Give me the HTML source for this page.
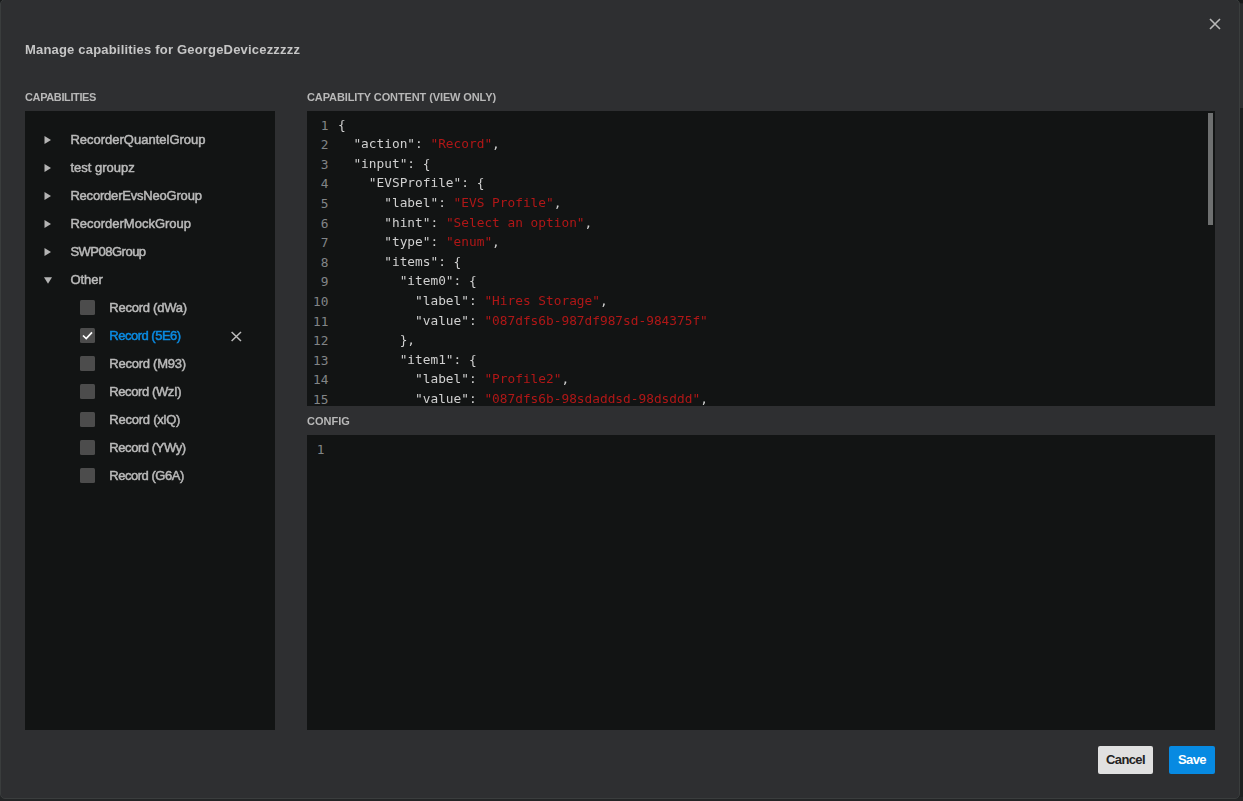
<!DOCTYPE html>
<html lang="en">
<head>
<meta charset="utf-8">
<title>Manage capabilities</title>
<style>
*{box-sizing:border-box;margin:0;padding:0}
html,body{width:1243px;height:801px;overflow:hidden;background:#232526}
body{font-family:"Liberation Sans",Arial,sans-serif;font-size:13px;color:#c9c9c9;position:relative}
.backdrop{position:absolute;left:0;top:0;width:1243px;height:801px;background:#232526}
.modal{position:absolute;left:0;top:-1px;width:1240px;height:800px;background:#2e2f31;border:1px solid #3a3d3d;border-radius:5px}
.abs{position:absolute;white-space:nowrap;will-change:transform}
.title{left:25px;top:41px;font-weight:bold;font-size:13px;line-height:18px;color:#c6c6c6;letter-spacing:0.19px}
.lbl{font-weight:bold;font-size:11px;line-height:14px;color:#b8b8b8}
.panel{position:absolute;background:#121414}
.tree-row{-webkit-text-stroke:0.5px #bababa;will-change:transform;position:absolute;left:0;width:250px;height:28px;line-height:28px;font-size:13px;color:#bababa;white-space:nowrap}
.tree-row .arrow{position:absolute;left:18px;top:9px;width:10px;height:10px}
.tree-row .txt{position:absolute;left:45.4px;top:0}
.tree-row .cb{position:absolute;left:55px;top:6px;width:15px;height:15px;background:#4c4c4c;border-radius:1.5px}
.tree-row .ctxt{position:absolute;left:84.3px;top:0}
.sel .ctxt{color:#0b8be2;-webkit-text-stroke:0.5px #0b8be2}
.code{position:absolute;left:0;top:0;font-family:"DejaVu Sans Mono","Liberation Mono",monospace;font-size:12.8px;color:#d0d0d0;white-space:pre}
.ln{position:absolute;left:0;width:21.4px;text-align:right;color:#828587;height:19.5px;line-height:19.5px}
.cl{will-change:transform;position:absolute;left:31.4px;height:19.5px;line-height:19.5px}
.s{color:#b01717}
.btn{position:absolute;top:746px;height:28px;line-height:28px;font-weight:bold;font-size:13px;text-align:center;border-radius:2px;letter-spacing:-0.6px}
</style>
</head>
<body>
<div class="backdrop"><div style="position:absolute;left:1238px;top:4px;width:5px;height:76px;background:#2a2c2d"></div><div style="position:absolute;left:1238px;top:80px;width:5px;height:28px;background:#2f3132"></div><div style="position:absolute;left:1238px;top:108px;width:5px;height:689px;background:#1d1f1f"></div><div style="position:absolute;left:0;top:0;width:1243px;height:3px;background:#17191a"></div></div>
<div class="modal"></div>

<svg class="abs" style="left:1209px;top:18px" width="12" height="12" viewBox="0 0 12 12"><path d="M1 1 L11 11 M11 1 L1 11" stroke="#b8b8b8" stroke-width="1.6" fill="none"/></svg>

<div class="abs title">Manage capabilities for GeorgeDevicezzzzz</div>
<div class="abs lbl" style="left:25px;top:90px;letter-spacing:-0.38px">CAPABILITIES</div>
<div class="abs lbl" style="left:307px;top:90px;letter-spacing:-0.11px">CAPABILITY CONTENT (VIEW ONLY)</div>
<div class="abs lbl" style="left:307px;top:414px">CONFIG</div>

<!-- left tree panel -->
<div class="panel" id="tree" style="left:25px;top:111px;width:250px;height:619px">
  <div class="tree-row" style="top:15px"><svg class="arrow" viewBox="0 0 10 10"><path d="M1.5 1 L8 5 L1.5 9 Z" fill="#b4b4b4"/></svg><span class="txt">RecorderQuantelGroup</span></div>
  <div class="tree-row" style="top:43px"><svg class="arrow" viewBox="0 0 10 10"><path d="M1.5 1 L8 5 L1.5 9 Z" fill="#b4b4b4"/></svg><span class="txt">test groupz</span></div>
  <div class="tree-row" style="top:71px"><svg class="arrow" viewBox="0 0 10 10"><path d="M1.5 1 L8 5 L1.5 9 Z" fill="#b4b4b4"/></svg><span class="txt" style="letter-spacing:-0.2px">RecorderEvsNeoGroup</span></div>
  <div class="tree-row" style="top:99px"><svg class="arrow" viewBox="0 0 10 10"><path d="M1.5 1 L8 5 L1.5 9 Z" fill="#b4b4b4"/></svg><span class="txt">RecorderMockGroup</span></div>
  <div class="tree-row" style="top:127px"><svg class="arrow" viewBox="0 0 10 10"><path d="M1.5 1 L8 5 L1.5 9 Z" fill="#b4b4b4"/></svg><span class="txt" style="letter-spacing:-0.5px">SWP08Group</span></div>
  <div class="tree-row" style="top:155px"><svg class="arrow" viewBox="0 0 10 10"><path d="M1 2.2 L9 2.2 L5 8.7 Z" fill="#b4b4b4"/></svg><span class="txt">Other</span></div>
  <div class="tree-row" style="top:183px"><span class="cb"></span><span class="ctxt" style="letter-spacing:-0.25px">Record (dWa)</span></div>
  <div class="tree-row sel" style="top:211px"><span class="cb"><svg width="15" height="15" viewBox="0 0 15 15" style="display:block"><path d="M3 7.5 L6.2 10.6 L12 4.4" stroke="#fff" stroke-width="1.7" fill="none"/></svg></span><span class="ctxt" style="letter-spacing:-0.5px">Record (5E6)</span>
    <svg style="position:absolute;left:206px;top:9px" width="11" height="11" viewBox="0 0 11 11"><path d="M0.6 1 L10 10 M10 1 L0.6 10" stroke="#bcbcbc" stroke-width="1.5" fill="none"/></svg></div>
  <div class="tree-row" style="top:239px"><span class="cb"></span><span class="ctxt" style="letter-spacing:-0.25px">Record (M93)</span></div>
  <div class="tree-row" style="top:267px"><span class="cb"></span><span class="ctxt" style="letter-spacing:-0.4px">Record (WzI)</span></div>
  <div class="tree-row" style="top:295px"><span class="cb"></span><span class="ctxt" style="letter-spacing:-0.23px">Record (xlQ)</span></div>
  <div class="tree-row" style="top:323px"><span class="cb"></span><span class="ctxt" style="letter-spacing:-0.43px">Record (YWy)</span></div>
  <div class="tree-row" style="top:351px"><span class="cb"></span><span class="ctxt" style="letter-spacing:-0.48px">Record (G6A)</span></div>
</div>

<!-- capability content editor -->
<div class="panel" id="ed1" style="left:307px;top:111px;width:908px;height:295px;overflow:hidden">
  <div class="code" id="code1">
<div class="ln" style="top:5px">1</div><div class="cl" style="top:4px">{</div>
<div class="ln" style="top:24px">2</div><div class="cl" style="top:23px">  "action": <span class="s">"Record"</span>,</div>
<div class="ln" style="top:44px">3</div><div class="cl" style="top:43px">  "input": {</div>
<div class="ln" style="top:63px">4</div><div class="cl" style="top:62px">    "EVSProfile": {</div>
<div class="ln" style="top:83px">5</div><div class="cl" style="top:82px">      "label": <span class="s">"EVS Profile"</span>,</div>
<div class="ln" style="top:103px">6</div><div class="cl" style="top:102px">      "hint": <span class="s">"Select an option"</span>,</div>
<div class="ln" style="top:122px">7</div><div class="cl" style="top:121px">      "type": <span class="s">"enum"</span>,</div>
<div class="ln" style="top:142px">8</div><div class="cl" style="top:141px">      "items": {</div>
<div class="ln" style="top:161px">9</div><div class="cl" style="top:160px">        "item0": {</div>
<div class="ln" style="top:181px">10</div><div class="cl" style="top:180px">          "label": <span class="s">"Hires Storage"</span>,</div>
<div class="ln" style="top:201px">11</div><div class="cl" style="top:200px">          "value": <span class="s">"087dfs6b-987df987sd-984375f"</span></div>
<div class="ln" style="top:220px">12</div><div class="cl" style="top:219px">        },</div>
<div class="ln" style="top:240px">13</div><div class="cl" style="top:239px">        "item1": {</div>
<div class="ln" style="top:259px">14</div><div class="cl" style="top:258px">          "label": <span class="s">"Profile2"</span>,</div>
<div class="ln" style="top:279px">15</div><div class="cl" style="top:278px">          "value": <span class="s">"087dfs6b-98sdaddsd-98dsddd"</span>,</div>
  </div>
  <div style="position:absolute;left:901px;top:2px;width:5px;height:112px;background:#6e7070"></div>
</div>

<!-- config editor -->
<div class="panel" id="ed2" style="left:307px;top:435px;width:908px;height:295px;overflow:hidden">
  <div class="code"><div class="ln" style="top:5px;width:17.5px">1</div></div>
</div>

<div class="btn" style="left:1098px;width:55px;background:#e0e0e0;color:#222">Cancel</div>
<div class="btn" style="left:1169px;width:46px;background:#078ae2;color:#fff">Save</div>
</body>
</html>
